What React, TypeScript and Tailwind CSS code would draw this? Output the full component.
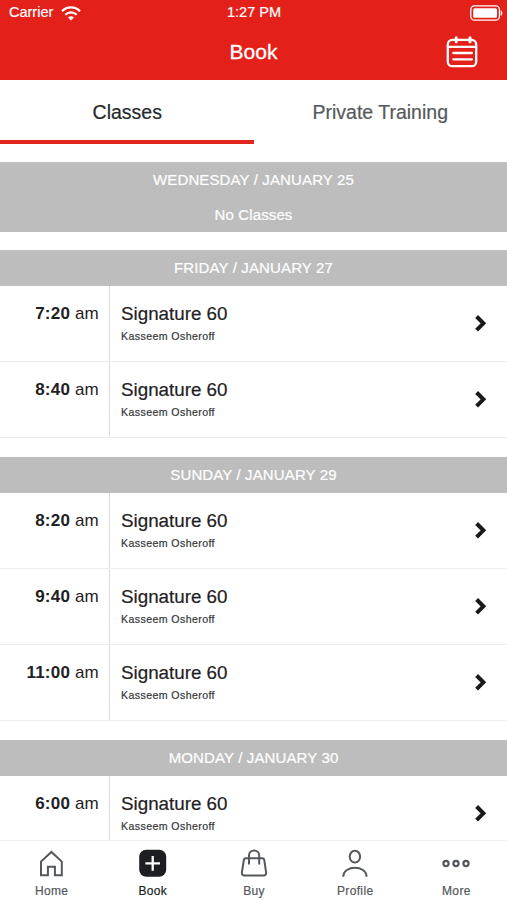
import clsx from 'clsx';

const days = [
  { date: 'WEDNESDAY / JANUARY 25', classes: [] },
  { date: 'FRIDAY / JANUARY 27', classes: ['7:20', '8:40'] },
  { date: 'SUNDAY / JANUARY 29', classes: ['8:20', '9:40', '11:00'] },
  { date: 'MONDAY / JANUARY 30', classes: ['6:00'] },
];

function StatusBar() {
  return (
    <div className="grid grid-cols-3 items-center h-[26px] pl-[9px] pr-[4px] text-[14.5px] [-webkit-text-stroke:0.2px_currentColor]">
      <div className="flex items-center gap-[8px]">
        <span>Carrier</span>
        <svg width="20" height="15" viewBox="0 0 20 15" fill="none" stroke="currentColor" strokeWidth="2.2">
          <path d="M1 5.2C6 .2 14 .2 19 5.2" />
          <path d="M4.3 8.7c3.3-3 8.1-3 11.4 0" />
          <path d="M10 14.6l-3-3.1c1.6-1.7 4.4-1.7 6 0z" fill="currentColor" stroke="none" />
        </svg>
      </div>
      <span className="text-center mr-[4px]">1:27 PM</span>
      <svg className="justify-self-end" width="33" height="16" viewBox="0 0 33 16" fill="none">
        <rect x=".8" y=".8" width="28.6" height="14.4" rx="3.6" stroke="currentColor" strokeWidth="1.3" />
        <rect x="3.2" y="3.2" width="23.8" height="9.6" rx="1.6" fill="currentColor" />
        <path d="M30.7 5.2c2.2.9 2.2 4.7 0 5.6z" fill="currentColor" />
      </svg>
    </div>
  );
}

function Header() {
  return (
    <header className="h-20 shrink-0 bg-[#e3211a] text-white">
      <StatusBar />
      <div className="grid grid-cols-[1fr_auto_1fr] items-center h-[52px]">
        <span />
        <h1 className="text-[21px] leading-6 [-webkit-text-stroke:0.3px_currentColor]">Book</h1>
        <svg className="justify-self-end mr-[29px]" width="32" height="32" viewBox="0 0 32 32" fill="none" stroke="currentColor" strokeWidth="2.3" strokeLinecap="round">
          <rect x="1.8" y="3.9" width="28.4" height="26.3" rx="4.5" />
          <path d="M2 10.8h28" />
          <path d="M10.2 1.7v4M24 1.7v4" strokeWidth="3" />
          <path d="M7.3 17h18.6M7.3 23.3h18.6" />
        </svg>
      </div>
    </header>
  );
}

function Tabs() {
  return (
    <div className="grid grid-cols-2 h-16 shrink-0 text-[19.5px] text-center leading-[60px] [-webkit-text-stroke:0.2px_currentColor]">
      <div className="h-16 border-b-4 border-[#e0261f] pt-[2px] pl-px text-[#25282a]">Classes</div>
      <div className="pt-[2px] text-[#55595c]">Private Training</div>
    </div>
  );
}

function ClassRow({ time }: { time: string }) {
  return (
    <div className="flex h-[76px] border-b border-[#ececec]">
      <div className="w-[110px] shrink-0 border-r border-[#dcdcdc] pr-[10px] pt-4 text-right text-[17px] leading-6 tracking-[0.2px]">
        <b>{time}</b> am
      </div>
      <div className="flex-1 pl-[11px] pt-4 [-webkit-text-stroke:0.2px_currentColor]">
        <div className="text-[18.8px] leading-6">Signature 60</div>
        <div className="mt-[3px] text-[10.6px] leading-[14px] tracking-[0.4px] text-[#34373a]">Kasseem Osheroff</div>
      </div>
      <svg className="mt-[28px] mr-5" width="14" height="18" viewBox="0 0 14 18" fill="none" stroke="#18191b" strokeWidth="4">
        <path d="M3.6 2.5L10.4 9.3l-6.8 6.8" />
      </svg>
    </div>
  );
}

function HomeIcon() {
  return (
    <svg width="28" height="28" viewBox="0 0 28 28" fill="none" stroke="currentColor" strokeWidth="2">
      <path d="M3 26.3V12.6L13.4 2.9l10.4 9.7v13.7h-6.9v-8.6h-7v8.6z" />
    </svg>
  );
}

function BookIcon() {
  return (
    <svg width="28" height="28" viewBox="0 0 28 28" fill="none">
      <rect x=".2" y=".8" width="27" height="27" rx="7" fill="#1c1e21" />
      <path d="M13.7 7.1v14.6M6.4 14.4h14.6" stroke="#fff" strokeWidth="2.3" />
    </svg>
  );
}

function BuyIcon() {
  return (
    <svg width="28" height="28" viewBox="0 0 28 28" fill="none" stroke="currentColor" strokeWidth="2">
      <path d="M5.6 9.2h16.9c1 0 1.5.5 1.7 1.5l1.9 12.6c.3 2.1-.7 3.2-2.6 3.2h-19c-1.9 0-2.9-1.1-2.6-3.2l2-12.6c.2-1 .7-1.5 1.7-1.5z" />
      <path d="M9 15.4V6.6c0-6.9 10.2-6.9 10.2 0v8.8" />
    </svg>
  );
}

function ProfileIcon() {
  return (
    <svg width="28" height="28" viewBox="0 0 28 28" fill="none" stroke="currentColor" strokeWidth="2">
      <ellipse cx="13.9" cy="7.7" rx="5.2" ry="5.9" />
      <path d="M2.3 27.7c0-12 23.2-12 23.2 0" />
    </svg>
  );
}

function MoreIcon() {
  return (
    <svg width="28" height="28" viewBox="0 0 28 28" fill="none" stroke="currentColor" strokeWidth="2.2">
      <circle cx="4" cy="14.5" r="2.6" />
      <circle cx="14" cy="14.5" r="2.6" />
      <circle cx="24" cy="14.5" r="2.6" />
    </svg>
  );
}

const navItems = [
  { label: 'Home', Icon: HomeIcon },
  { label: 'Book', Icon: BookIcon, active: true },
  { label: 'Buy', Icon: BuyIcon },
  { label: 'Profile', Icon: ProfileIcon },
  { label: 'More', Icon: MoreIcon },
];

function BottomNav() {
  return (
    <nav className="grid grid-cols-5 h-[60px] shrink-0 border-t border-[#f0f0f0] bg-white pl-px">
      {navItems.map(({ label, Icon, active }) => (
        <div key={label} className={clsx('flex flex-col items-center pt-[8px] text-[12px] leading-4 tracking-[0.35px] [-webkit-text-stroke:0.2px_currentColor]', active ? 'text-[#1c1e21]' : 'text-[#54585c]')}>
          <Icon />
          <span className="mt-[6px]">{label}</span>
        </div>
      ))}
    </nav>
  );
}

export default function App() {
  return (
    <div className="flex flex-col h-screen overflow-hidden bg-white text-[#1f2123] font-['Liberation_Sans',Arial,sans-serif]">
      <Header />
      <Tabs />
      <main className="flex-1 min-h-0 overflow-hidden pt-[18px]">
        {days.map(({ date, classes }) => (
          <section key={date} className={classes.length ? 'mb-[19px]' : 'mb-[18px]'}>
            <div className="bg-[#bdbdbd] text-white text-center text-[15px] leading-9 tracking-[0.13px] [-webkit-text-stroke:0.2px_currentColor]">
              <h2>{date}</h2>
              {!classes.length && <p className="h-[34px] leading-[34px]">No Classes</p>}
            </div>
            {classes.map((time) => (
              <ClassRow key={time} time={time} />
            ))}
          </section>
        ))}
      </main>
      <BottomNav />
    </div>
  );
}
